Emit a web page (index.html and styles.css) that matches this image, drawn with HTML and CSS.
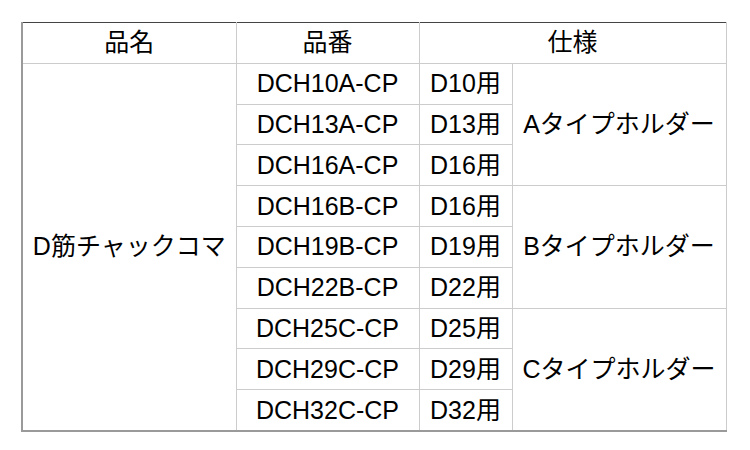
FILE: index.html
```html
<!DOCTYPE html>
<html lang="ja">
<head>
<meta charset="utf-8">
<title>D筋チャックコマ</title>
<link rel="stylesheet" href="styles.css">
</head>
<body>
<table class="spec">
  <colgroup>
    <col class="c-name">
    <col class="c-code">
    <col class="c-size">
    <col class="c-type">
  </colgroup>
  <thead>
    <tr><th>品名</th><th>品番</th><th colspan="2">仕様</th></tr>
  </thead>
  <tbody>
    <tr><td rowspan="9">D筋チャックコマ</td><td>DCH10A-CP</td><td>D10用</td><td rowspan="3">Aタイプホルダー</td></tr>
    <tr><td>DCH13A-CP</td><td>D13用</td></tr>
    <tr><td>DCH16A-CP</td><td>D16用</td></tr>
    <tr><td>DCH16B-CP</td><td>D16用</td><td rowspan="3">Bタイプホルダー</td></tr>
    <tr><td>DCH19B-CP</td><td>D19用</td></tr>
    <tr><td>DCH22B-CP</td><td>D22用</td></tr>
    <tr><td>DCH25C-CP</td><td>D25用</td><td rowspan="3">Cタイプホルダー</td></tr>
    <tr><td>DCH29C-CP</td><td>D29用</td></tr>
    <tr><td>DCH32C-CP</td><td>D32用</td></tr>
  </tbody>
</table>
</body>
</html>
```
FILE: styles.css
```css
html, body {
  margin: 0;
  padding: 0;
  background: #ffffff;
}
body {
  padding: 22px 0 0 21px;
  font-family: "Liberation Sans", "Noto Sans CJK JP", sans-serif;
  color: #000000;
}
.spec {
  border-collapse: collapse;
  table-layout: fixed;
  width: 704px;
  border-top: 1px solid #444444;
  border-right: 1px solid #333333;
  border-left: 2px solid #9a9a9a;
  border-bottom: 2px solid #9a9a9a;
}
.c-name { width: 214px; }
.c-code { width: 183px; }
.c-size { width: 93px; }
.c-type { width: 214px; }
.spec th,
.spec td {
  border: 1px solid #cccccc;
  height: 39.8px;
  padding: 0;
  text-align: center;
  vertical-align: middle;
  font-size: 25px;
  font-weight: normal;
  line-height: 39px;
  white-space: nowrap;
}
.spec thead th {
  border-top: 1px solid #444444;
}
```
